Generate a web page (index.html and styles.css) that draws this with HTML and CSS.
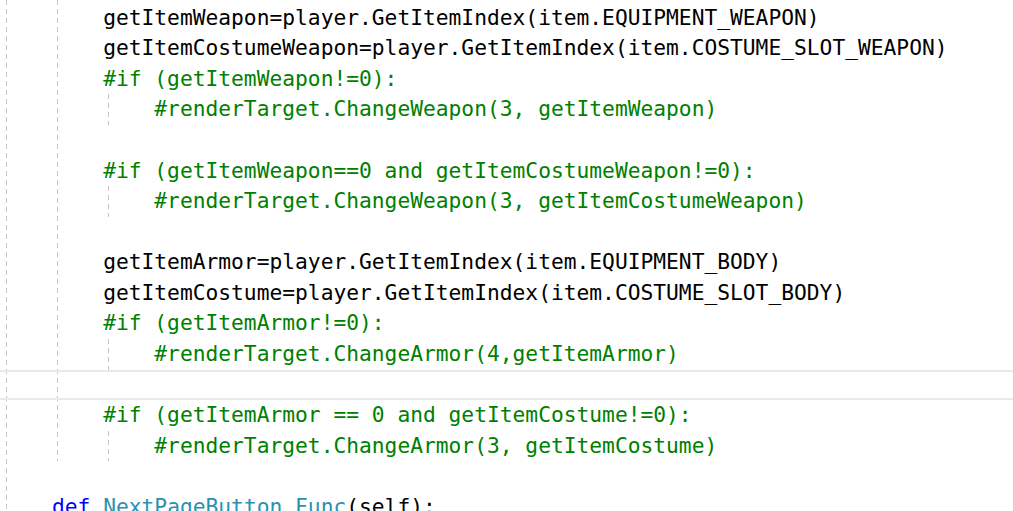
FILE: index.html
```html
<!DOCTYPE html>
<html>
<head>
<meta charset="utf-8">
<link rel="stylesheet" href="styles.css">
</head>
<body>
<div class="editor">
  <div class="guide guide-outer"></div>
  <div class="guide guide-method"></div>
  <div class="code">
    <div class="line">        getItemWeapon=player.GetItemIndex(item.EQUIPMENT_WEAPON)</div>
    <div class="line">        getItemCostumeWeapon=player.GetItemIndex(item.COSTUME_SLOT_WEAPON)</div>
    <div class="line cm">        #if (getItemWeapon!=0):</div>
    <div class="line cm inner">            #renderTarget.ChangeWeapon(3, getItemWeapon)</div>
    <div class="line"> </div>
    <div class="line cm">        #if (getItemWeapon==0 and getItemCostumeWeapon!=0):</div>
    <div class="line cm inner">            #renderTarget.ChangeWeapon(3, getItemCostumeWeapon)</div>
    <div class="line"> </div>
    <div class="line">        getItemArmor=player.GetItemIndex(item.EQUIPMENT_BODY)</div>
    <div class="line">        getItemCostume=player.GetItemIndex(item.COSTUME_SLOT_BODY)</div>
    <div class="line cm">        #if (getItemArmor!=0):</div>
    <div class="line cm inner">            #renderTarget.ChangeArmor(4,getItemArmor)</div>
    <div class="line current"> </div>
    <div class="line cm">        #if (getItemArmor == 0 and getItemCostume!=0):</div>
    <div class="line cm inner">            #renderTarget.ChangeArmor(3, getItemCostume)</div>
    <div class="line"> </div>
    <div class="line">    <span class="kw">def</span> <span class="fn">NextPageButton_Func</span>(self):</div>
  </div>
</div>
</body>
</html>
```
FILE: styles.css
```css
html, body {
  margin: 0;
  padding: 0;
  background: #ffffff;
  width: 1013px;
  height: 511px;
  overflow: hidden;
}
.editor {
  position: relative;
  width: 1013px;
  height: 511px;
  overflow: hidden;
  background: #ffffff;
}
.code {
  padding-top: 2.7px;
  padding-left: 0.8px;
  font-family: "DejaVu Sans Mono", "Liberation Mono", monospace;
  font-size: 21.26px;
  color: #000000;
}
.line {
  position: relative;
  height: 30.58px;
  line-height: 30.58px;
  white-space: pre;
}
.cm { color: #008000; }
.kw { color: #0000ff; }
.fn { color: #2b91af; }
.current {
  box-sizing: border-box;
  margin-left: -0.8px;
  border-top: 2px solid #e8e8f1;
  border-bottom: 2px solid #e8e8f1;
}
.guide {
  position: absolute;
  width: 1px;
  background-image: repeating-linear-gradient(to bottom, #c4c4c4 0, #c4c4c4 5px, transparent 5px, transparent 9px);
}
.guide-outer {
  left: 6px;
  top: 0;
  bottom: 0;
}
.guide-method {
  left: 57px;
  top: 0;
  height: 461px;
}
.inner::before {
  content: "";
  position: absolute;
  left: 107px;
  top: 0;
  bottom: 0;
  width: 1px;
  background-image: repeating-linear-gradient(to bottom, #c4c4c4 0, #c4c4c4 5px, transparent 5px, transparent 9px);
}
```
